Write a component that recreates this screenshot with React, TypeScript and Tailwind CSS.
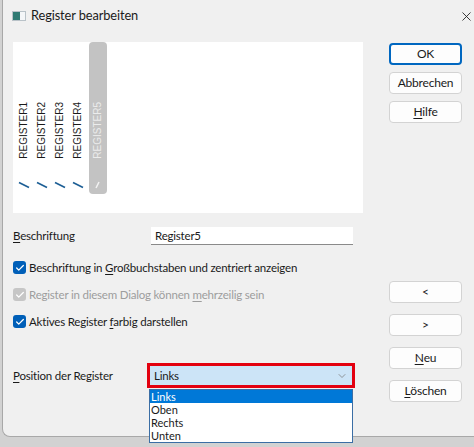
import { Check, ChevronDown, X } from 'lucide-react';

const font = { fontFamily: 'Lato, "Noto Sans", Arial, sans-serif' };

function Btn({ children, primary = false, className = '' }: { children: React.ReactNode; primary?: boolean; className?: string }) {
  return (
    <div
      className={`flex h-[22px] w-[73px] items-center justify-center rounded-[4px] bg-[#fdfdfd] text-[12px] tracking-[-0.2px] text-[#1a1a1a] ${
        primary ? 'border-2 border-[#0067c0]' : 'border border-[#d3d3d3]'
      } ${className}`}
    >
      {children}
    </div>
  );
}

function Tab({ label, active = false }: { label: string; active?: boolean }) {
  return (
    <div
      className={`flex h-[152px] w-[18px] flex-col items-center justify-end pb-[5px] ${
        active ? 'ml-[2px] rounded-[4px] bg-[#c3c3c3]' : ''
      }`}
    >
      <span
        className={`text-[10px] leading-none ${active ? 'text-[#ececec]' : 'text-[#1a1a1a]'}`}
        style={{ writingMode: 'vertical-rl', transform: 'rotate(180deg)', fontFamily: '"Liberation Sans", Arial, sans-serif' }}
      >
        {label}
      </span>
      <svg width="12" height="8" viewBox="0 0 12 8" className="mt-[22px]">
        {active ? (
          <line x1="4" y1="7" x2="7" y2="1" stroke="#f2f2f2" strokeWidth="1.6" />
        ) : (
          <line x1="1" y1="1.5" x2="11" y2="6.5" stroke="#1d5f95" strokeWidth="1.6" />
        )}
      </svg>
    </div>
  );
}

function CheckRow({ children, disabled = false }: { children: React.ReactNode; disabled?: boolean }) {
  return (
    <div className="flex h-[27px] items-center gap-[3px]">
      <span
        className={`flex h-[13px] w-[13px] items-center justify-center rounded-[3px] ${
          disabled ? 'bg-[#c6c6c6]' : 'bg-[#005fb8]'
        }`}
      >
        <Check size={10} strokeWidth={3} color="#ffffff" />
      </span>
      <span className={`text-[11.5px] tracking-[-0.2px] ${disabled ? 'text-[#9d9d9d]' : 'text-[#1a1a1a]'}`}>{children}</span>
    </div>
  );
}

export default function App() {
  return (
    <div className="relative h-[447px] w-[474px] overflow-hidden bg-[#d2d2d2]" style={font}>
      <div className="ml-[2px] h-[437px] w-[490px] rounded-bl-[8px] border-b border-l border-[#a8a8a8] bg-[#f0f0f0]">
        <div className="flex h-[32px] items-center pl-[9px]">
          <svg width="14" height="10" viewBox="0 0 14 10">
            <rect x="0.5" y="0.5" width="13" height="9" fill="#f4f6f8" stroke="#b9c2c8" />
            <rect x="1" y="1" width="7" height="8" fill="#2f7a73" />
          </svg>
          <span className="ml-[5px] text-[12.8px] tracking-[-0.1px] text-[#1a1a1a]">Register bearbeiten</span>
          <X size={15} strokeWidth={1.4} className="ml-[321px] text-[#222]" />
        </div>
        <div className="flex pl-[10px] pt-[10px]">
          <div className="w-[350px]">
            <div className="flex h-[171px] bg-white pl-[2px]">
              <Tab label="REGISTER1" />
              <Tab label="REGISTER2" />
              <Tab label="REGISTER3" />
              <Tab label="REGISTER4" />
              <Tab label="REGISTER5" active />
            </div>
            <div className="mt-[14px] flex h-[18px] items-center">
              <span className="w-[138px] text-[11.5px] tracking-[-0.2px] text-[#1a1a1a]">
                <span className="underline underline-offset-2">B</span>eschriftung
              </span>
              <div className="flex h-[18px] w-[202px] items-center border-b border-[#8a8a8a] bg-white pl-[4px] text-[11.5px] tracking-[-0.2px] text-[#1a1a1a]">
                Register5
              </div>
            </div>
            <div className="mt-[9px]">
              <CheckRow>
                Beschriftung in <span className="underline underline-offset-2">G</span>roßbuchstaben und zentriert anzeigen
              </CheckRow>
              <CheckRow disabled>
                Register in diesem Dialog können <span className="underline underline-offset-2">m</span>ehrzeilig sein
              </CheckRow>
              <CheckRow>
                Aktives Register <span className="underline underline-offset-2">f</span>arbig darstellen
              </CheckRow>
            </div>
            <div className="mt-[28px] flex h-[25px] items-center">
              <span className="w-[134px] text-[11.5px] tracking-[-0.2px] text-[#1a1a1a]">
                <span className="underline underline-offset-2">P</span>osition der Register
              </span>
              <div className="h-[25px] w-[208px] border-[3px] border-[#e3000f]">
                <div className="flex h-full items-center justify-between bg-[#cce4f7] pl-[4px] pr-[4px] text-[11.5px] tracking-[-0.2px] text-[#1a1a1a]">
                  Links
                  <ChevronDown size={12} strokeWidth={1.5} className="text-[#7a7a7a]" />
                </div>
              </div>
            </div>
          </div>
          <div className="ml-[26px] flex flex-col pt-[1px]">
            <Btn primary>OK</Btn>
            <Btn className="mt-[7px]">Abbrechen</Btn>
            <Btn className="mt-[7px]">
              <span className="underline underline-offset-2">H</span>ilfe
            </Btn>
            <Btn className="mt-[158px]">&lt;</Btn>
            <Btn className="mt-[11px]">&gt;</Btn>
            <Btn className="mt-[11px]">
              <span className="underline underline-offset-2">N</span>eu
            </Btn>
            <Btn className="mt-[11px]">
              <span className="underline underline-offset-2">L</span>öschen
            </Btn>
          </div>
        </div>
      </div>
      <div className="absolute left-[149px] top-[389px] w-[204px] border border-[#3b6ea5] bg-white text-[11px] leading-[13px] text-[#1a1a1a]">
        <div className="h-[13px] bg-[#0078d7] pl-[1px] text-white">Links</div>
        <div className="h-[13px] pl-[1px]">Oben</div>
        <div className="h-[13px] pl-[1px]">Rechts</div>
        <div className="h-[13px] pl-[1px]">Unten</div>
      </div>
    </div>
  );
}
